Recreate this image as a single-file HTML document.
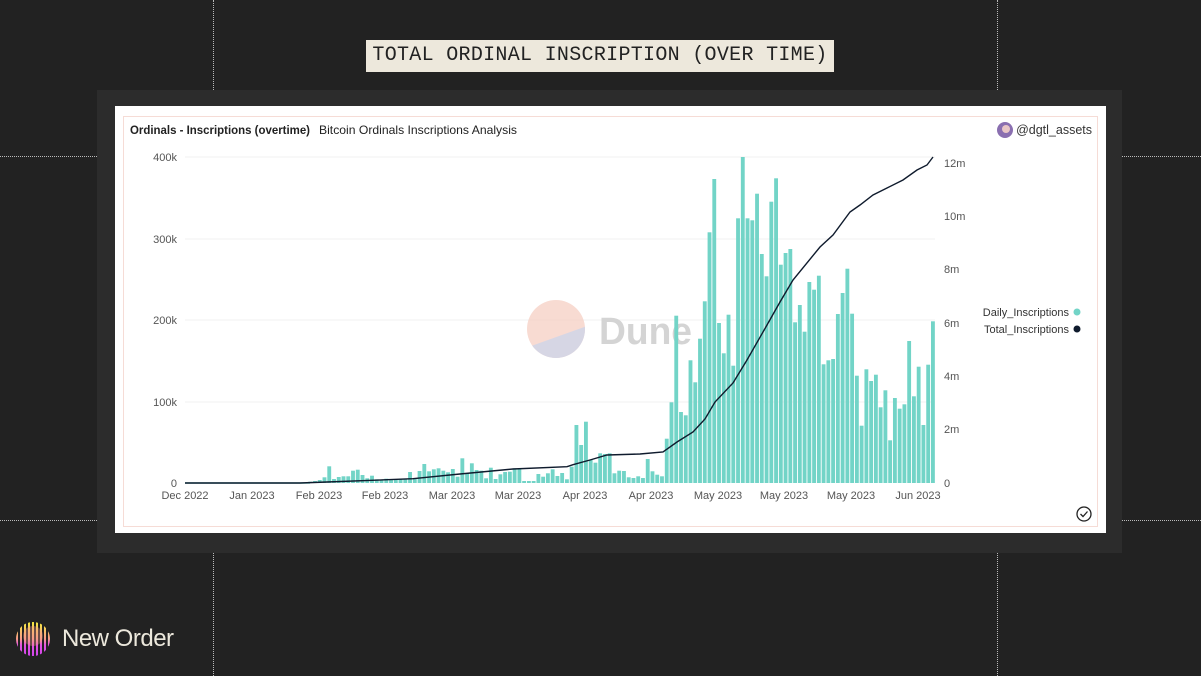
<!DOCTYPE html>
<html><head><meta charset="utf-8"><style>
html,body{margin:0;padding:0}
body{width:1201px;height:676px;background:#222222;position:relative;overflow:hidden;font-family:"Liberation Sans",sans-serif}
.v{position:absolute;width:0;border-left:1px dotted #bbb}
.h{position:absolute;height:0;border-top:1px dotted #bbb}
#title{position:absolute;left:366px;top:40px;width:468px;height:32px;background:#ede8dc;color:#222;font-family:"Liberation Mono",monospace;font-size:20px;line-height:32px;text-align:center;white-space:nowrap;letter-spacing:0.3px}
#panel{position:absolute;left:97px;top:90px;width:1025px;height:463px;background:#2c2c2c}
#card{position:absolute;left:115px;top:106px;width:991px;height:427px;background:#fff}
#inner{position:absolute;left:123px;top:116px;width:975px;height:411px;border:1px solid #f6dcd6;box-sizing:border-box}
#logo{position:absolute;left:15px;top:621px}
#brand{position:absolute;left:62px;top:625px;color:#ece8dc;font-size:24px;letter-spacing:-0.5px}
</style></head><body>
<div class="v" style="left:213px;top:0;height:90px"></div>
<div class="v" style="left:997px;top:0;height:90px"></div>
<div class="v" style="left:213px;top:553px;height:123px"></div>
<div class="v" style="left:997px;top:553px;height:123px"></div>
<div class="h" style="left:0;top:156px;width:97px"></div>
<div class="h" style="left:1122px;top:156px;width:79px"></div>
<div class="h" style="left:0;top:520px;width:97px"></div>
<div class="h" style="left:1122px;top:520px;width:79px"></div>
<div id="title">TOTAL ORDINAL INSCRIPTION (OVER TIME)</div>
<div id="panel"></div>
<div id="card"></div>
<div id="inner"></div>
<svg width="1201" height="676" style="position:absolute;left:0;top:0" font-family="Liberation Sans, sans-serif">
<text x="130" y="134" font-size="11.5" font-weight="bold" fill="#222" textLength="180" lengthAdjust="spacingAndGlyphs">Ordinals - Inscriptions (overtime)</text>
<text x="319" y="134" font-size="12" fill="#222" textLength="198" lengthAdjust="spacingAndGlyphs">Bitcoin Ordinals Inscriptions Analysis</text>
<circle cx="1005" cy="130" r="8" fill="#8a6fb0"/><circle cx="1006" cy="129" r="4" fill="#e9c6c6"/>
<text x="1092" y="134" font-size="12.5" fill="#333" text-anchor="end">@dgtl_assets</text>
<g stroke="#f0f0f0" stroke-width="1">
<line x1="185" y1="157" x2="935" y2="157"/><line x1="185" y1="239" x2="935" y2="239"/><line x1="185" y1="320" x2="935" y2="320"/><line x1="185" y1="402" x2="935" y2="402"/>
</g>
<g font-size="11" fill="#555" text-anchor="end">
<text x="177" y="161">400k</text><text x="177" y="243">300k</text><text x="177" y="324">200k</text><text x="177" y="406">100k</text><text x="177" y="487">0</text>
</g>
<g font-size="11" fill="#555">
<text x="944" y="167">12m</text><text x="944" y="220">10m</text><text x="944" y="273">8m</text><text x="944" y="327">6m</text><text x="944" y="380">4m</text><text x="944" y="433">2m</text><text x="944" y="487">0</text>
</g>
<g font-size="11" fill="#555" text-anchor="middle">
<text x="185" y="499">Dec 2022</text><text x="252" y="499">Jan 2023</text><text x="319" y="499">Feb 2023</text><text x="385" y="499">Feb 2023</text><text x="452" y="499">Mar 2023</text><text x="518" y="499">Mar 2023</text><text x="585" y="499">Apr 2023</text><text x="651" y="499">Apr 2023</text><text x="718" y="499">May 2023</text><text x="784" y="499">May 2023</text><text x="851" y="499">May 2023</text><text x="918" y="499">Jun 2023</text>
</g>
<g opacity="0.75">
<clipPath id="c"><circle cx="556" cy="329" r="29"/></clipPath>
<g clip-path="url(#c)"><rect x="520" y="295" width="80" height="80" fill="#f6cfc4"/><polygon points="520,350 590,325 590,370 520,370" fill="#c9c9dc"/></g>
</g>
<text x="599" y="344" font-size="38" font-weight="bold" fill="#d4d4d4" textLength="93" lengthAdjust="spacingAndGlyphs">Dune</text>
<g id="bars" fill="#72d4c7"></g>
<line x1="185" y1="483" x2="310" y2="483" stroke="#72d4c7" stroke-width="1.5"/>
<polyline fill="none" stroke="#0f1b2d" stroke-width="1.4" points="185,483 300,483 327,482 413,478.7 460,474 513,469 567,466.7 573,464.7 590,460 607,455 640,454 663,452 677,442 693,432 705,419 715,402 733,383 747,360 767,325 780,302 793,280 820,247 833,235 850,212 860,205 873,195 887,188 903,180 917,170 927,165 933,157"/>
<g font-size="11" fill="#333" text-anchor="end">
<text x="1069" y="316">Daily_Inscriptions</text><text x="1069" y="333">Total_Inscriptions</text>
</g>
<circle cx="1077" cy="312" r="3.5" fill="#72d4c7"/><circle cx="1077" cy="329" r="3.5" fill="#0f1b2d"/>
<circle cx="1084" cy="514" r="7" fill="none" stroke="#222" stroke-width="1.3"/>
<polyline points="1080.5,514 1083,516.5 1087.5,511.5" fill="none" stroke="#222" stroke-width="1.3"/>
</svg>
<svg id="logo" width="36" height="40" viewBox="0 0 36 40">
<defs><linearGradient id="g" x1="0" y1="0" x2="0" y2="1"><stop offset="0" stop-color="#f6f03a"/><stop offset="0.45" stop-color="#f79a8a"/><stop offset="0.6" stop-color="#e455e0"/><stop offset="1" stop-color="#c83cf0"/></linearGradient>
<clipPath id="lc"><circle cx="18" cy="18" r="17"/></clipPath></defs>
<g clip-path="url(#lc)" fill="url(#g)">
<rect x="1" y="0" width="2" height="40"/><rect x="5" y="0" width="2" height="40"/><rect x="9" y="0" width="2" height="40"/><rect x="13" y="0" width="2" height="40"/><rect x="17" y="0" width="2" height="40"/><rect x="21" y="0" width="2" height="40"/><rect x="25" y="0" width="2" height="40"/><rect x="29" y="0" width="2" height="40"/><rect x="33" y="0" width="2" height="40"/>
</g>
<circle cx="18" cy="15" r="10" fill="#f79a8a" opacity="0.35"/>
</svg>
<div id="brand">New Order</div>
<script>
var h=[1.3,2,3,5.7,16.7,4,6,6.7,6.7,12.3,13.3,8,4.7,7.3,3.7,3,4.3,3,3,3.7,4.3,11,4.7,12,19,11.7,13.7,14.7,12.3,10.7,14,6.3,24.7,9.7,19.7,13,12.3,4.7,15.3,4,8.7,11,11.3,14.7,14,2,2,2,9,6.3,9.7,13.7,7,10,3.7,16.3,58,38,61.3,23,20.3,29.7,29,29.7,9.7,12.3,12,5.7,5,6.7,5,24,
11.7,8.3,6.7,44.3,80.7,167.3,71,67.7,122.7,100.7,144.3,181.7,250.7,304,160,129.7,168.3,117.3,264.7,326,264.7,262.7,289.3,229,206.7,281.3,304.7,218.3,230,234,160.7,178,151.3,201,193.3,207.3,118.7,122.7,124,169,190,214.3,169.3,107.3,57.3,113.7,102,108.3,75.7,92.7,42.7,85,74.3,78.7,142,86.7,116.3,58,118.3,161.7];
var n=h.length,x0=308.3,x1=931,p=(x1-x0)/(n-1),s='';
for(var i=0;i<n;i++){var x=x0+i*p;s+='<rect x="'+x.toFixed(2)+'" y="'+(483-h[i]).toFixed(1)+'" width="'+(p-0.9).toFixed(2)+'" height="'+h[i]+'"/>';}
document.getElementById('bars').innerHTML=s;
</script>
</body></html>
